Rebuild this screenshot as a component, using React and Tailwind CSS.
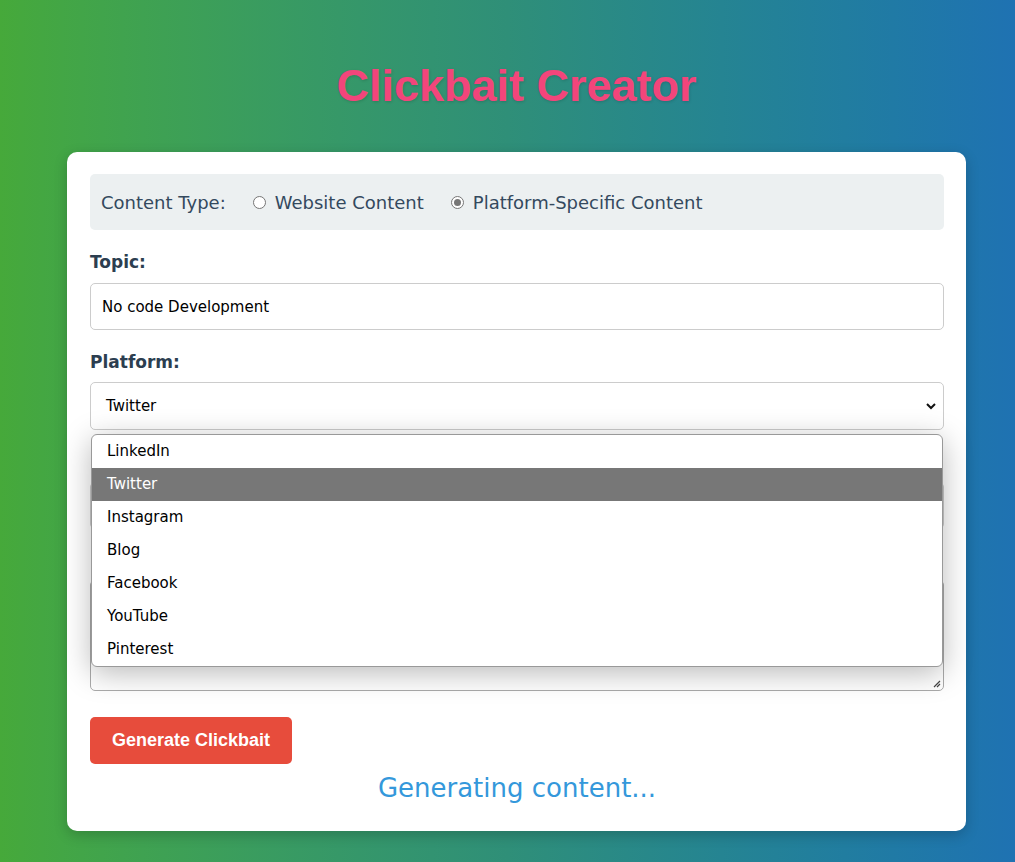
import React, { useState } from 'react';

const options = ['LinkedIn', 'Twitter', 'Instagram', 'Blog', 'Facebook', 'YouTube', 'Pinterest'];

// radio ที่วาดเอง ให้เหมือน native สีเทา
const Radio = ({ checked }) => (
  <span className="inline-flex w-[13px] h-[13px] rounded-full border border-[#767676] bg-white items-center justify-center mr-[9px]">
    {checked && <span className="w-[7px] h-[7px] rounded-full bg-[#777]" />}
  </span>
);

export default function App() {
  const [topic, setTopic] = useState('No code Development');

  return (
    <div className="min-h-[862px] bg-gradient-to-r from-[#46a93a] via-[#2f8f78] to-[#1f72b2] font-['DejaVu_Sans',sans-serif] pt-[58px] pb-[31px] pl-[67px] pr-[49px]">
      <h1 className="text-center font-['Liberation_Sans',Arial,sans-serif] font-bold text-[45px] leading-[56px] text-[#f2457b] [text-shadow:1px_1px_3px_rgba(0,0,0,0.15)]">
        Clickbait Creator
      </h1>

      <div className="mt-[38px] bg-white rounded-[10px] shadow-[0_4px_14px_rgba(0,0,0,0.2)] pl-[23px] pr-[22px] pt-[22px] pb-[25px]">
        {/* content type */}
        <div className="bg-[#ecf0f1] rounded-[5px] h-[56px] px-[11px] flex items-center text-[18px] text-[#34495e]">
          <span className="mr-[27px]">Content Type:</span>
          <label className="flex items-center mr-[27px]"><Radio checked={false} />Website Content</label>
          <label className="flex items-center"><Radio checked />Platform-Specific Content</label>
        </div>

        <div className="mt-[20px]">
          <label className="block text-[17px] leading-[24px] font-bold text-[#2c3e50] mb-[9px]">Topic:</label>
          <input
            value={topic}
            onChange={(e) => setTopic(e.target.value)}
            className="w-full h-[47px] border border-[#ccc] rounded-[5px] px-[11px] text-[15px] text-black outline-none"
          />
        </div>

        <div className="mt-[20px] relative">
          <label className="block text-[17px] leading-[24px] font-bold text-[#2c3e50] mb-[8px]">Platform:</label>
          <div className="relative h-[48px] border border-[#ccc] rounded-[5px] flex items-center px-[15px] text-[15px] text-black">
            Twitter
            <svg className="absolute right-[7px] top-[19px]" width="10" height="8" viewBox="0 0 10 8">
              <path d="M1 2l4 4 4-4" fill="none" stroke="#111" strokeWidth="2" />
            </svg>
          </div>

          {/* native dropdown list ที่เปิดอยู่ */}
          <div className="absolute z-10 left-[1px] right-[1px] top-[84px] bg-white border border-[#999] rounded-[6px] shadow-[0_6px_30px_rgba(0,0,0,0.28)] overflow-hidden text-[15px]">
            {options.map((o) => (
              <div
                key={o}
                className={`h-[33px] flex items-center px-[15px] ${o === 'Twitter' ? 'bg-[#777] text-white' : 'text-black'}`}
              >
                {o}
              </div>
            ))}
          </div>
        </div>

        {/* ช่องที่ถูก dropdown บังอยู่ */}
        <div className="mt-[20px]">
          <div className="h-[24px] mb-[8px]" />
          <div className="h-[47px] border border-[#ccc] rounded-[5px]" />
        </div>

        <div className="mt-[20px]">
          <div className="h-[24px] mb-[7px]" />
          <div className="relative h-[111px] border border-[#aaa] rounded-[5px]">
            <svg className="absolute right-[2px] bottom-[2px]" width="8" height="8" viewBox="0 0 8 8">
              <path d="M1 7L7 1M4 7L7 4" stroke="#444" strokeWidth="1.2" />
            </svg>
          </div>
        </div>

        <button className="mt-[26px] h-[47px] px-[22px] bg-[#e74c3c] rounded-[5px] text-white font-bold text-[18px] font-['Liberation_Sans',Arial,sans-serif]">
          Generate Clickbait
        </button>

        <p className="text-center text-[#3498db] text-[26px] leading-[36px] mt-[6px]">Generating content...</p>
      </div>
    </div>
  );
}
